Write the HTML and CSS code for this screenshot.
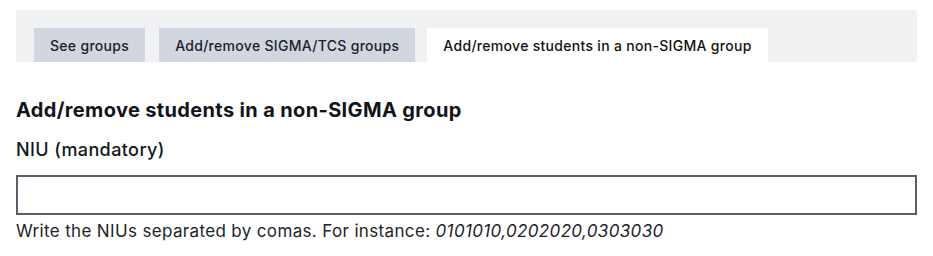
FILE: index.html
```html
<!DOCTYPE html>
<html lang="en">
<head>
<meta charset="utf-8">
<title>Groups</title>
<link rel="stylesheet" href="styles.css">
</head>
<body>
<div class="page">
  <nav class="tabs">
    <a class="tab" href="#">See groups</a>
    <a class="tab" href="#">Add/remove SIGMA/TCS groups</a>
    <a class="tab active" href="#">Add/remove students in a non-SIGMA group</a>
  </nav>
  <h2 class="title">Add/remove students in a non-SIGMA group</h2>
  <label class="label" for="niu">NIU (mandatory)</label>
  <input class="field" id="niu" type="text">
  <p class="help">Write the NIUs separated by comas. For instance: <em>0101010,0202020,0303030</em></p>
</div>
</body>
</html>
```

FILE: styles.css
```css
html, body {
  margin: 0;
  padding: 0;
  background: #ffffff;
}
body {
  font-family: Inter, "Noto Sans", sans-serif;
  color: #111820;
}
.page {
  padding: 10px 16px 0 16px;
}
.tabs {
  display: flex;
  gap: 14px;
  background: #f0f1f3;
  padding: 18px 18px 0 18px;
  height: 34px;
}
.tab {
  display: flex;
  align-items: center;
  padding: 0 16px;
  background: #d2d6de;
  color: #1b2129;
  text-decoration: none;
  font-size: 14px;
  font-weight: 500;
  letter-spacing: 0.3px;
}
.tab.active {
  background: #ffffff;
  margin-left: -2px;
  color: #111;
}
.title {
  margin: 34px 0 0 0;
  font-size: 20px;
  font-weight: 700;
  line-height: 28px;
  letter-spacing: 0.35px;
  color: #111418;
}
.label {
  display: block;
  margin-top: 13px;
  font-size: 18px;
  font-weight: 500;
  line-height: 25px;
  letter-spacing: 0.4px;
}
.field {
  display: block;
  box-sizing: border-box;
  width: 100%;
  height: 40px;
  margin-top: 13px;
  border: 2px solid #56606b;
  border-radius: 0;
  background: #fff;
  outline: none;
}
.help {
  margin: 4px 0 0 0;
  font-size: 17px;
  line-height: 24px;
  color: #1d232b;
  letter-spacing: 0.35px;
}
.help em {
  font-style: italic;
}
```
